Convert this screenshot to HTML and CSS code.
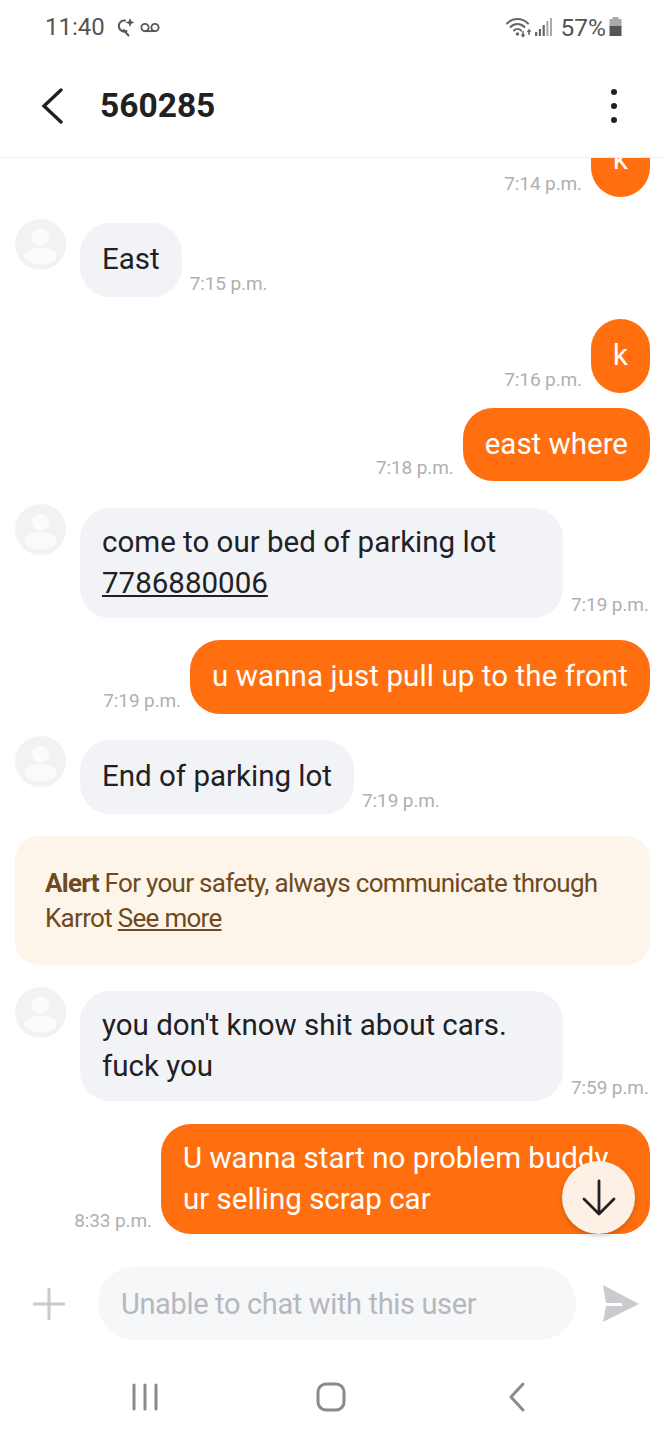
FILE: index.html
```html
<!DOCTYPE html>
<html lang="en">
<head>
    <meta charset="UTF-8">
    <meta name="viewport" content="width=device-width, initial-scale=1.0">
    <title>560285</title>
    <link rel="stylesheet" href="styles.css">
</head>
<body>
<div class="phone">
    <div class="status-bar">
        <div class="status-left">
            <span class="clock">11:40</span>
            <svg width="20" height="20" viewBox="0 0 20 20">
                <path d="M10 3.500a5.500 5.500 0 1 0 1.500 10.500M8.500 13l5 5.500" fill="none" stroke="#555" stroke-width="2" stroke-linecap="round"/>
                <path d="M15 1l1.300 3.200 3.200 1.300-3.200 1.300-1.300 3.200-1.300-3.200-3.200-1.300 3.200-1.300z" fill="#555"/>
            </svg>
            <svg class="icon-voicemail" width="20" height="11" viewBox="0 0 22 12">
                <circle cx="5.500" cy="6" r="4" fill="none" stroke="#555" stroke-width="2"/>
                <circle cx="16.500" cy="6" r="4" fill="none" stroke="#555" stroke-width="2"/>
                <path d="M5.500 10h11" stroke="#555" stroke-width="2"/>
            </svg>
        </div>
        <div class="status-right">
            <svg width="27" height="22" viewBox="0 0 27 22">
                <g fill="none" stroke="#666" stroke-width="2" stroke-linecap="round">
                    <path d="M1 7.500c6-6 15-6 21 0"/>
                    <path d="M4.500 11c4-4 10-4 14 0"/>
                    <path d="M8 14.500c2-2 5-2 7 0"/>
                </g>
                <circle cx="11.500" cy="18" r="1.700" fill="#666"/>
                <path d="M17 15v5M15.500 18.500l1.500 2 1.500-2M23 19v-5M21.500 16l1.500-2 1.500 2" fill="none" stroke="#666" stroke-width="1.500"/>
            </svg>
            <svg class="icon-signal" width="18" height="20" viewBox="0 0 18 20">
                <rect x="0" y="15" width="2.200" height="4" fill="#666"/>
                <rect x="3.800" y="12" width="2.200" height="7" fill="#666"/>
                <rect x="7.600" y="8" width="2.200" height="11" fill="#666"/>
                <rect x="11.400" y="4" width="2" height="15" fill="#aaa"/>
                <rect x="15" y="1" width="2" height="18" fill="#aaa"/>
            </svg>
            <span class="battery-text">57%</span>
            <svg width="13" height="20" viewBox="0 0 13 20">
                <rect x="3.500" y="0" width="6" height="3" fill="#aaa"/>
                <rect x="0.500" y="2" width="12" height="8" fill="#aaa"/>
                <rect x="0.500" y="9" width="12" height="10" fill="#555"/>
            </svg>
        </div>
    </div>

    <div class="chat-header">
        <svg class="icon-back" width="24" height="36" viewBox="0 0 24 36">
            <path d="M21 2L4 18l17 16" fill="none" stroke="#212124" stroke-width="3.400" stroke-linecap="round"/>
        </svg>
        <h1 class="chat-title">560285</h1>
        <div class="kebab">
            <span class="dot"></span>
            <span class="dot"></span>
            <span class="dot"></span>
        </div>
    </div>

    <div class="messages">
        <div class="row sent first">
            <span class="time">7:14 p.m.</span>
            <div class="bubble">k</div>
        </div>

        <div class="row received">
            <div class="avatar">
                <svg width="51" height="51" viewBox="0 0 51 51">
                    <circle cx="25.500" cy="25.500" r="25.500" fill="#f2f2f3"/>
                    <circle cx="25.500" cy="18" r="8.500" fill="#fbfbfc"/>
                    <ellipse cx="25.500" cy="37" rx="16" ry="8.500" fill="#fbfbfc"/>
                </svg>
            </div>
            <div class="bubble">East</div>
            <span class="time">7:15 p.m.</span>
        </div>

        <div class="row sent">
            <span class="time">7:16 p.m.</span>
            <div class="bubble">k</div>
        </div>

        <div class="row sent next">
            <span class="time">7:18 p.m.</span>
            <div class="bubble">east where</div>
        </div>

        <div class="row received">
            <div class="avatar">
                <svg width="51" height="51" viewBox="0 0 51 51">
                    <circle cx="25.500" cy="25.500" r="25.500" fill="#f2f2f3"/>
                    <circle cx="25.500" cy="18" r="8.500" fill="#fbfbfc"/>
                    <ellipse cx="25.500" cy="37" rx="16" ry="8.500" fill="#fbfbfc"/>
                </svg>
            </div>
            <div class="bubble multi">come to our bed of parking lot <a class="phone-link" href="#">7786880006</a></div>
            <span class="time">7:19 p.m.</span>
        </div>

        <div class="row sent">
            <span class="time">7:19 p.m.</span>
            <div class="bubble wide">u wanna just pull up to the front</div>
        </div>

        <div class="row received">
            <div class="avatar">
                <svg width="51" height="51" viewBox="0 0 51 51">
                    <circle cx="25.500" cy="25.500" r="25.500" fill="#f2f2f3"/>
                    <circle cx="25.500" cy="18" r="8.500" fill="#fbfbfc"/>
                    <ellipse cx="25.500" cy="37" rx="16" ry="8.500" fill="#fbfbfc"/>
                </svg>
            </div>
            <div class="bubble">End of parking lot</div>
            <span class="time">7:19 p.m.</span>
        </div>

        <div class="alert">
            <b>Alert</b> For your safety, always communicate through Karrot <a href="#">See more</a>
        </div>

        <div class="row received">
            <div class="avatar">
                <svg width="51" height="51" viewBox="0 0 51 51">
                    <circle cx="25.500" cy="25.500" r="25.500" fill="#f2f2f3"/>
                    <circle cx="25.500" cy="18" r="8.500" fill="#fbfbfc"/>
                    <ellipse cx="25.500" cy="37" rx="16" ry="8.500" fill="#fbfbfc"/>
                </svg>
            </div>
            <div class="bubble multi">you don't know shit about cars. fuck you</div>
            <span class="time">7:59 p.m.</span>
        </div>

        <div class="row sent">
            <span class="time">8:33 p.m.</span>
            <div class="bubble multi">U wanna start no problem buddy ur selling scrap car</div>
        </div>

        <button class="scroll-down">
            <svg width="36" height="38" viewBox="0 0 36 38">
                <path d="M18 2v33M3 20l15 15 15-15" fill="none" stroke="#212124" stroke-width="2.800" stroke-linecap="round" stroke-linejoin="round"/>
            </svg>
        </button>
    </div>

    <div class="composer">
        <svg width="32" height="32" viewBox="0 0 32 32">
            <path d="M16 1v30M1 16h30" stroke="#c9cacd" stroke-width="3" stroke-linecap="round"/>
        </svg>
        <div class="composer-input">Unable to chat with this user</div>
        <svg width="36" height="38" viewBox="0 0 36 38">
            <path d="M0 0l36 19L0 37l3-16h15a1.500 1.500 0 0 0 0-3H3z" fill="#c9cbcf"/>
        </svg>
    </div>

    <div class="nav-bar">
        <svg width="28" height="28" viewBox="0 0 28 28">
            <path d="M3 2v24M14 2v24M25 2v24" stroke="#8a8a8a" stroke-width="3" stroke-linecap="round"/>
        </svg>
        <svg class="nav-home" width="30" height="30" viewBox="0 0 30 30">
            <rect x="2" y="2" width="26" height="26" rx="8" fill="none" stroke="#8a8a8a" stroke-width="3"/>
        </svg>
        <svg class="nav-back" width="18" height="30" viewBox="0 0 18 30">
            <path d="M15 2L3 15l12 13" fill="none" stroke="#8a8a8a" stroke-width="3" stroke-linecap="round" stroke-linejoin="round"/>
        </svg>
    </div>
</div>
</body>
</html>
```

FILE: styles.css
```css
* {
  box-sizing: border-box;
}

body {
  margin: 0;
  background-color: #fff;
  font-family: Roboto, "Liberation Sans", sans-serif;
  color: #212124;
}

.phone {
  width: 665px;
  height: 1440px;
  display: flex;
  flex-direction: column;
  overflow: hidden;
}

/* status bar */
.status-bar {
  height: 54px;
  flex: none;
  display: flex;
  align-items: center;
  justify-content: space-between;
  padding: 0 43px 0 45px;
  color: #555;
}

.status-left,
.status-right {
  display: flex;
  align-items: center;
}

.clock {
  font-size: 24px;
  margin-right: 10px;
}

.icon-voicemail {
  margin-left: 5px;
}

.icon-signal {
  margin-left: 2px;
}

.battery-text {
  font-size: 24.5px;
  margin: 0 3px 0 8px;
}

/* header */
.chat-header {
  height: 104px;
  flex: none;
  display: flex;
  align-items: center;
  padding: 0 48px 0 40px;
  border-bottom: 1px solid #f1f1f1;
}

.icon-back {
  margin-right: 36px;
}

.chat-title {
  flex: 1;
  margin: 0;
  font-size: 33.5px;
  font-weight: 700;
}

.kebab {
  display: flex;
  flex-direction: column;
  gap: 8px;
}

.dot {
  width: 6px;
  height: 6px;
  border-radius: 50%;
  background-color: #212124;
}

/* messages */
.messages {
  flex: 1;
  position: relative;
  overflow: hidden;
  padding: 0 15px;
}

.row {
  display: flex;
  align-items: flex-end;
  margin-top: 22.5px;
}

.row.first {
  margin-top: -35px;
}

.row.next {
  margin-top: 15px;
}

.row.sent {
  justify-content: flex-end;
  gap: 9px;
}

.row.received {
  margin-top: 26.5px;
  gap: 8px;
}

.bubble {
  font-size: 29.5px;
  line-height: 41.5px;
  padding: 16px 22px;
  border-radius: 30px;
}

.bubble.multi {
  line-height: 41px;
  padding: 14px 22px;
}

.bubble.wide {
  letter-spacing: 0.09px;
}

.sent .bubble {
  max-width: 489px;
  background-color: #ff6f0f;
  color: #fff;
}

.received .bubble {
  max-width: 483px;
  background-color: #f2f3f6;
}

.avatar {
  width: 51px;
  height: 51px;
  align-self: flex-start;
  margin: -4px 6px 0 0;
}

.time {
  font-size: 19px;
  color: #aeb0b4;
  padding-bottom: 2px;
  letter-spacing: -0.1px;
  white-space: nowrap;
}

.phone-link {
  color: inherit;
}

.alert {
  margin-top: 22.5px;
  padding: 29.5px 30px;
  background-color: #fdf5ea;
  border-radius: 24px;
  font-size: 26px;
  line-height: 35px;
  letter-spacing: -0.7px;
  color: #6f4a1e;
}

.alert + .row.received {
  margin-top: 26px;
}

.alert a {
  color: inherit;
}

.scroll-down {
  position: absolute;
  left: 562px;
  top: 1003px;
  width: 73px;
  height: 73px;
  border: none;
  border-radius: 50%;
  background-color: #fdf1e6;
  box-shadow: 0 2px 5px rgba(0, 0, 0, 0.2);
  display: flex;
  align-items: center;
  justify-content: center;
  padding: 0;
}

/* composer */
.composer {
  flex: none;
  display: flex;
  align-items: center;
  gap: 27px;
  padding-left: 33px;
  margin-bottom: 23px;
}

.composer-input {
  width: 478px;
  height: 73px;
  margin-left: 6px;
  padding: 0 23px;
  display: flex;
  align-items: center;
  background-color: #f6f7f9;
  border-radius: 36px;
  font-size: 29px;
  letter-spacing: -0.35px;
  color: #b5b8bd;
}

/* nav */
.nav-bar {
  flex: none;
  height: 77px;
  padding: 0 0 9px 131px;
  display: flex;
  align-items: center;
}

.nav-home {
  margin-left: 157px;
}

.nav-back {
  margin-left: 162px;
}
```
